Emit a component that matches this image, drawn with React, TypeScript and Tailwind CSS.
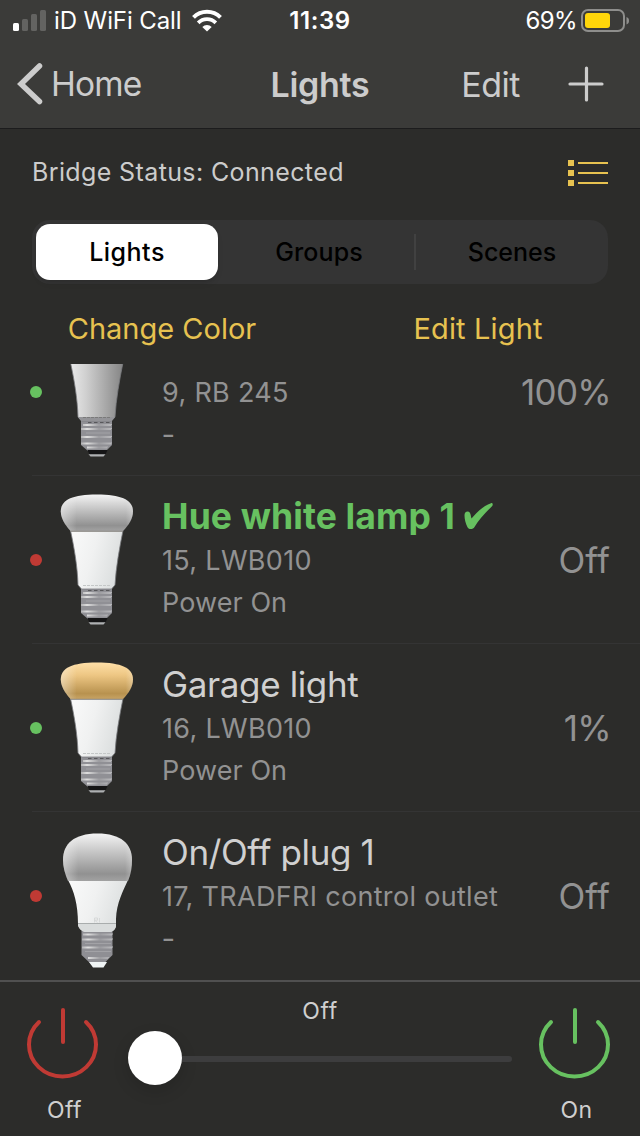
import React from "react";

type BulbKind = "dim" | "white" | "warm" | "plug";

interface Light {
  name: string;
  info: string;
  power: string;
  value: string;
  on: boolean;
  selected?: boolean;
  bulb: BulbKind;
}

const lights: Light[] = [
  { name: "", info: "9, RB 245", power: "-", value: "100%", on: true, bulb: "dim" },
  { name: "Hue white lamp 1", info: "15, LWB010", power: "Power On", value: "Off", on: false, selected: true, bulb: "white" },
  { name: "Garage light", info: "16, LWB010", power: "Power On", value: "1%", on: true, bulb: "warm" },
  { name: "On/Off plug 1", info: "17, TRADFRI control outlet", power: "-", value: "Off", on: false, bulb: "plug" },
];

function Gradients() {
  return (
    <svg width="0" height="0" className="absolute">
      <defs>
        <linearGradient id="domeGray" x1="0" y1="0" x2="0" y2="1">
          <stop offset="0" stopColor="#f4f4f4" />
          <stop offset="0.25" stopColor="#d6d6d6" />
          <stop offset="0.85" stopColor="#919191" />
          <stop offset="1" stopColor="#a2a2a2" />
        </linearGradient>
        <linearGradient id="domeWarm" x1="0" y1="0" x2="0" y2="1">
          <stop offset="0" stopColor="#ffe0a8" />
          <stop offset="0.35" stopColor="#edc683" />
          <stop offset="0.85" stopColor="#b8924f" />
          <stop offset="1" stopColor="#c7a364" />
        </linearGradient>
        <linearGradient id="edge" x1="0" x2="1">
          <stop offset="0" stopColor="#fff" stopOpacity="0.4" />
          <stop offset="0.22" stopColor="#fff" stopOpacity="0" />
          <stop offset="0.9" stopColor="#fff" stopOpacity="0" />
          <stop offset="1" stopColor="#fff" stopOpacity="0.25" />
        </linearGradient>
        <linearGradient id="bodyWhite" x1="0" y1="0" x2="1" y2="0.3">
          <stop offset="0" stopColor="#fafafa" />
          <stop offset="0.5" stopColor="#f0f1f1" />
          <stop offset="1" stopColor="#dcdfdf" />
        </linearGradient>
        <linearGradient id="bodyDim" x1="0" x2="1">
          <stop offset="0" stopColor="#eaeaea" />
          <stop offset="0.3" stopColor="#cfcfcf" />
          <stop offset="1" stopColor="#858585" />
        </linearGradient>
        <linearGradient id="thread" x1="0" x2="1">
          <stop offset="0" stopColor="#b2b2b4" />
          <stop offset="0.2" stopColor="#dedede" />
          <stop offset="0.6" stopColor="#9c9ca0" />
          <stop offset="1" stopColor="#b8b8bb" />
        </linearGradient>
      </defs>
    </svg>
  );
}

function Bulb({ kind }: { kind: BulbKind }) {
  if (kind === "plug") {
    return (
      <svg width="84" height="167" viewBox="0 0 84 167" className="shrink-0">
        <path d="M25.500 119h31v24l-9 9H35l-9.500-9z" fill="#8f8f94" />
        <path d="M33 150h18l-3.500 5.500H37z" fill="#f0f4f4" />
        <g stroke="url(#thread)" strokeWidth="2">
          <path d="M27 122.500h29v.01M26 127.500h30v.01M26 135.500h30v.01M32 146h20v.01" />
        </g>
        <g stroke="#a2a2a6" strokeWidth="1"><path d="M29 131.500h26M29 139.500h26" /></g>
        <path d="M12 68h60C67 79 60.500 91 60 107v6c0 4-3 7-7 7H30c-4 0-8-4-8-8C22 92 18 79 12 68z" fill="url(#bodyWhite)" />
        <path d="M22 111.500h38v2c-.5 4-3 6.500-7 6.500H30c-4 0-8-4-8-8z" fill="#d9dcdc" />
        <path d="M22 111.500h38" stroke="#a9adad" />
        <path d="M38.500 110.500v-4.500h3v2.200h-3l3 2.300M43.500 106v4.500" stroke="#d2d4d4" strokeWidth="0.800" fill="none" />
        <path d="M12 69C9 62 7 55 7 48c0-16 11-26.500 34.500-26.500S76 32 76 48c0 7-1 14-4 21z" fill="url(#domeGray)" />
        <path d="M12 69C9 62 7 55 7 48c0-16 11-26.500 34.500-26.500S76 32 76 48c0 7-1 14-4 21z" fill="url(#edge)" />
      </svg>
    );
  }
  const dome = "M14.500 55C9 49 4.800 42 4.800 35.500C4.800 24 16 18.500 40.800 18.500S77 24 77 35.500C77 42 73 49 67 55z";
  return (
    <svg width="84" height="167" viewBox="0 0 84 167" className="shrink-0">
      <path d="M25 110h31v27l-6 6H32l-7-6z" fill="#909095" />
      <path d="M31.500 142h20l-2 4.500h-16z" fill="#151516" />
      <path d="M32.500 146.300h17l-2 2.200H34.500z" fill="#aeb0b2" />
      <g stroke="url(#thread)" strokeWidth="2">
        <path d="M27 117h28v.01M25 121h30v.01M25 129h30v.01M25 135.500h30v.01M31 139.500h20v.01" />
      </g>
      <path d="M30 125h24" stroke="#a2a2a6" />
      <path
        d="M14.500 54.500H67C63.500 72 60 91 59 109l-3.500 4h-30L22 109C21.500 90 18 71 14.500 54.500z"
        fill={kind === "dim" ? "url(#bodyDim)" : "url(#bodyWhite)"}
        stroke="#7b7c80"
        strokeWidth="0.800"
      />
      {kind === "dim" && <path d="M22 109h37l-3.500 4h-30z" fill="#949498" />}
      <path d="M27 109.500h28" stroke={kind === "dim" ? "#7a7a7a" : "#c4c7c7"} strokeDasharray="3 1" />
      <path d="M32 114.500h22" stroke="#58585b" strokeDasharray="3.500 2.500" />
      <path d={dome} fill={kind === "warm" ? "url(#domeWarm)" : "url(#domeGray)"} />
      <path d={dome} fill="url(#edge)" />
      <path d="M14.500 55.300H67" stroke="#85827d" strokeWidth="1" />
    </svg>
  );
}

function LightRow({ light }: { light: Light }) {
  return (
    <div className="flex h-[168px] items-start pl-[30px]">
      <span className={`mt-[78px] size-3 shrink-0 rounded-full ${light.on ? "bg-[#67c160]" : "bg-[#c03a34]"}`} />
      <div className="ml-3.5">
        <Bulb kind={light.bulb} />
      </div>
      <div className="ml-[22px] flex-1 whitespace-nowrap pt-[18px] text-[#929292]">
        <div
          className={`mb-[4px] flex h-[41px] items-start overflow-hidden ${
            light.selected
              ? "text-[35.500px] font-bold leading-[46px] tracking-[0.120px] text-[#67c160]"
              : "text-[35px] leading-[44px] tracking-[-0.380px] text-[#d0d0d0]"
          }`}
        >
          {light.name}
          {light.selected && (
            <svg width="30" height="28" viewBox="0 0 30 28" className="ml-[9px] mt-[8px]">
              <path d="M.5 13.500C.5 11 1.500 9.500 3.800 9.500c2.900 0 2.900 4 3.700 7C12 11 19 4 27 1.200c1.800-.6 2.300 1.700 1 3C21 11 14.500 18 10.500 25c-1.500 2.600-5.500 2.800-7 .2C1.500 21.500.5 17 .5 13.500z" fill="#67c160" />
            </svg>
          )}
        </div>
        <div className="h-[43px] text-[27px] leading-[44px] tracking-[0.320px]">{light.info}</div>
        <div className="h-[40px] text-[27px] leading-[42px] tracking-[0.080px]">
          <span className={light.power === "-" ? "inline-block scale-x-110" : ""}>{light.power}</span>
        </div>
      </div>
      <div
        className={`pt-[62px] text-[35px] leading-[44px] text-[#929292] ${
          light.value === "Off" ? "mr-[30px] tracking-[0.100px]" : "mr-[29px] tracking-[-0.700px]"
        }`}
      >
        {light.value}
      </div>
    </div>
  );
}

function PowerButton({ label, tone }: { label: string; tone: string }) {
  return (
    <button className="flex w-[76px] flex-col items-center">
      <svg width="76" height="75" viewBox="0 0 76 75" className={tone} fill="none" stroke="currentColor" strokeWidth="4" strokeLinecap="round">
        <path d="M38 4v32" />
        <path d="M14 16A33.500 31.800 0 1 0 61 16" />
      </svg>
      <span className="mt-[13px] pl-[3px] text-[23px] leading-[32px] tracking-[0.400px] text-[#cfcfcf]">{label}</span>
    </button>
  );
}

export default function App() {
  return (
    <div className="flex h-[1136px] w-[640px] flex-col overflow-hidden bg-[#2c2c2a] font-['Inter',sans-serif] text-[#cccccc]">
      <Gradients />
      <header className="h-[129px] shrink-0 border-b border-[#1c1c1d] bg-[#3b3b39]">
        <div className="grid h-10 grid-cols-3 items-center whitespace-nowrap text-white">
          <div className="flex h-10 items-center pl-[13px]">
            <svg width="33" height="22" viewBox="0 0 33 22" fill="#636361" className="-mt-[2px] shrink-0">
              <rect x="0" y="14" width="6" height="8" rx="1.500" fill="#fff" />
              <rect x="9" y="10" width="6" height="12" rx="1.500" />
              <rect x="18" y="5" width="6" height="17" rx="1.500" />
              <rect x="27" y="1" width="6" height="21" rx="1.500" />
            </svg>
            <span className="ml-[8px] text-[24px] leading-[42px] tracking-[-0.100px]">iD WiFi Call</span>
            <svg width="30" height="23" viewBox="0 0 30 23" className="-mt-[2px] ml-[10px] shrink-0" fill="none" stroke="#fff" strokeWidth="4">
              <path d="M1.500 8.300a19 19 0 0 1 27 0" />
              <path d="M6.200 13.800a12.400 12.400 0 0 1 17.600 0" strokeWidth="3.800" />
              <path d="M10.300 18a6.600 6.600 0 0 1 9.400 0L15 22.600z" fill="#fff" stroke="none" />
            </svg>
          </div>
          <div className="text-center text-[24px] font-semibold leading-[42px] tracking-[0.600px]">11:39</div>
          <div className="flex h-10 items-center justify-end pr-[11px]">
            <span className="text-[24px] leading-[42px] tracking-[-0.600px]">69%</span>
            <svg width="48" height="24" viewBox="0 0 48 24" className="ml-1">
              <rect x="1" y="1" width="42" height="21" rx="6" fill="none" stroke="#8e8e8c" strokeWidth="2" />
              <rect x="4" y="4" width="25" height="15" rx="3" fill="#ffd60a" />
              <path d="M45.500 8c2 .8 2.500 2 2.500 3.700S47.500 14.700 45.500 15.500z" fill="#8e8e8c" />
            </svg>
          </div>
        </div>
        <div className="grid h-[88px] grid-cols-3 items-center text-[34px]">
          <button className="flex items-center pl-[17px]">
            <svg width="26" height="44" viewBox="0 0 26 44" fill="none" stroke="currentColor" strokeWidth="5.500" strokeLinecap="round" strokeLinejoin="miter">
              <path d="M22.500 4L4 22l18.500 17.500" />
            </svg>
            <span className="ml-[8px] pt-px text-[33.500px] tracking-[-0.900px]">Home</span>
          </button>
          <h1 className="text-center font-semibold tracking-[-0.300px]">Lights</h1>
          <div className="flex items-center justify-end gap-[48px] pr-[36px]">
            <button className="tracking-[-0.500px]">Edit</button>
            <svg width="36" height="36" viewBox="0 0 36 36" stroke="currentColor" strokeWidth="3.200" strokeLinecap="round">
              <path d="M2 18h32M18.500 2v32" />
            </svg>
          </div>
        </div>
      </header>

      <main className="flex min-h-0 flex-1 flex-col">
        <div className="flex h-[91px] shrink-0 items-start justify-between px-8 pt-[23px]">
          <span className="text-[25px] leading-10 tracking-[0.380px]">Bridge Status: Connected</span>
          <svg width="40" height="26" viewBox="0 0 40 26" className="mt-2" fill="#e7c250">
            <path d="M0 0h6v6H0zM0 10h6v6H0zM0 20h6v6H0zM10 2h30v2H10zM10 12h30v2H10zM10 22h30v2H10z" />
          </svg>
        </div>
        <nav className="mx-8 flex h-16 shrink-0 items-center rounded-[18px] bg-[#343434] p-1 text-[25px] font-medium text-black">
          <button className="h-14 w-[182px] rounded-[14px] bg-white pt-[2px] tracking-[0.500px] shadow-md">Lights</button>
          <button className="h-14 flex-1 pl-[6px] pt-[2px] tracking-[0.100px]">Groups</button>
          <span className="h-9 w-[2px] bg-[#414141]" />
          <button className="h-14 w-[188px] pl-1 pt-[2px]">Scenes</button>
        </nav>
        <div className="grid h-20 shrink-0 grid-cols-2 pt-[24px] text-[29px] leading-[42px] text-[#e7c250]">
          <button className="h-[42px] pl-1">Change Color</button>
          <button className="h-[42px] pr-1 tracking-[0.150px]">Edit Light</button>
        </div>
        <section className="h-[616px] shrink-0 overflow-hidden">
          <ul className="-mt-14">
            {lights.map((light, i) => (
              <li key={light.info} className="relative">
                <LightRow light={light} />
                {i < 3 && <span className="absolute bottom-0 left-8 right-0 h-px bg-[#343434]" />}
              </li>
            ))}
          </ul>
        </section>
      </main>

      <footer className="flex h-[156px] shrink-0 border-t-2 border-[#505050] pl-[25px] pt-[24px]">
        <PowerButton label="Off" tone="text-[#c03a34]" />
        <div className="-mt-[11px] ml-[27px] mr-[25px] flex w-[384px] flex-col items-center">
          <span className="text-[23px] leading-[32px] tracking-[0.600px] text-[#cfcfcf]">Off</span>
          <div className="mt-[3px] flex h-[56px] w-full items-center">
            <span className="size-[54px] shrink-0 rounded-full bg-white shadow-[0_6px_16px_rgba(0,0,0,0.15)]" />
            <span className="mt-[2px] h-[6px] flex-1 rounded-r-full bg-[#3d3d3e]" />
          </div>
        </div>
        <PowerButton label="On" tone="text-[#67c160]" />
      </footer>
    </div>
  );
}
